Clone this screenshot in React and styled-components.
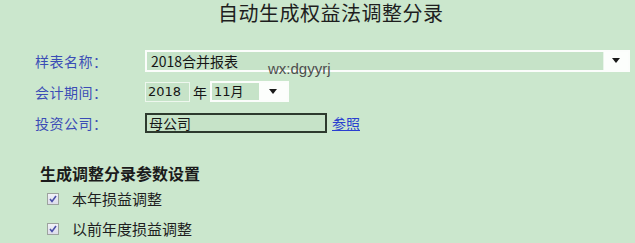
import React from "react";
import styled, { createGlobalStyle } from "styled-components";

const Global = createGlobalStyle`
    html, body {
        margin: 0;
        padding: 0;
        background: #cbe7cd;
    }
    body {
        font-family: "Noto Sans CJK SC", "Liberation Sans", sans-serif;
        line-height: 1.2;
    }
`

const Page = styled.div`
    position: relative;
    width: 635px;
    height: 243px;
    overflow: hidden;
    background: #cbe7cd;
    box-sizing: border-box;
    padding: 0 5px 0 35px;
`

const Title = styled.h1`
    margin: 0;
    padding-left: 183px;
    height: 26px;
    line-height: 26px;
    font-size: 20px;
    font-weight: normal;
    color: #1e1e1e;
    letter-spacing: 0.5px;
`

const Form = styled.div`
    margin-top: 19px;
    display: flex;
    flex-direction: column;
`

const Row = styled.div`
    display: flex;
    align-items: center;
    height: 31px;
`

const Label = styled.div`
    width: 110px;
    font-size: 14px;
    line-height: 20px;
    color: #3b4db6;
    letter-spacing: 0.5px;
`

const SelectBox = styled.div`
    display: flex;
    align-items: stretch;
    width: ${p => p.w}px;
    height: ${p => p.h || 22}px;
    border: 2px solid #fbfdfb;
    box-sizing: border-box;
    background: #c6e3c8;
`

const SelectText = styled.div`
    flex: 1;
    display: flex;
    align-items: center;
    padding-left: 4px;
    font-size: 14px;
    line-height: 18px;
    color: #151515;
    border-right: 1px solid #e9f4ea;
`

const ArrowCell = styled.div`
    width: ${p => p.w || 24}px;
    background: #fcfefc;
    display: flex;
    align-items: center;
    justify-content: center;
`

const Arrow = styled.span`
    width: 0;
    height: 0;
    border-left: 4px solid transparent;
    border-right: 4px solid transparent;
    border-top: 5px solid #1a1a1a;
`

const YearBox = styled.div`
    width: 45px;
    height: 20px;
    box-sizing: border-box;
    border: 1px solid #eef7ee;
    background: #c6e3c8;
    font-family: "DejaVu Sans", "Liberation Sans", sans-serif;
    font-size: 13px;
    line-height: 18px;
    color: #151515;
    display: flex;
    align-items: center;
    padding-left: 2px;
`

const Unit = styled.span`
    font-size: 14px;
    line-height: 20px;
    color: #151515;
    margin: 0 3px 0 3px;
`

const MonthText = styled(SelectText)`
    font-family: "DejaVu Sans", "Noto Sans CJK SC", sans-serif;
    font-size: 13px;
    border-right: none;
    padding-left: 2px;
`

const InputBox = styled.div`
    width: 182px;
    height: 20px;
    box-sizing: border-box;
    border: 2px solid #2d3a2e;
    background: #c6e3c8;
    font-size: 14px;
    line-height: 16px;
    color: #151515;
    display: flex;
    align-items: center;
    padding-left: 2px;
`

const Link = styled.a`
    margin-left: 5px;
    font-size: 14px;
    line-height: 20px;
    color: #2a3fd0;
    text-decoration: underline;
    cursor: pointer;
`

const Section = styled.div`
    margin-top: 24px;
    padding-left: 5px;
`

const SectionTitle = styled.div`
    font-size: 16px;
    font-weight: bold;
    color: #1b1b1b;
    height: 22px;
    line-height: 22px;
`

const CheckRow = styled.label`
    display: flex;
    align-items: center;
    height: 34px;
    padding-left: 7px;
    font-size: 15px;
    line-height: 20px;
    color: #1e1e1e;
    &:first-of-type {
        height: 26px;
        margin-top: 2px;
    }
`

const Check = styled.span`
    width: 12px;
    height: 12px;
    box-sizing: border-box;
    border: 1px solid #9da39e;
    background: linear-gradient(#f2f2f8, #dcdcea);
    margin-right: 13px;
    display: flex;
    align-items: center;
    justify-content: center;
`

const Watermark = styled.div`
    position: absolute;
    left: 268px;
    top: 60px;
    font-family: "Liberation Sans", sans-serif;
    font-size: 15px;
    line-height: 18px;
    color: #4e4e4e;
`

const Tick = () => (
    <svg width="8" height="8" viewBox="0 0 8 8">
        <path d="M1 4 L3 6.5 L7 1" fill="none" stroke="#4a4fa8" strokeWidth="1.6" />
    </svg>
)

const App = () => {
    return <Page>
        <Global />
        <Title>自动生成权益法调整分录</Title>
        <Form>
            <Row>
                <Label>样表名称：</Label>
                <SelectBox w={485} h={22}>
                    <SelectText>2018合并报表</SelectText>
                    <ArrowCell w={24}><Arrow /></ArrowCell>
                </SelectBox>
            </Row>
            <Row>
                <Label>会计期间：</Label>
                <YearBox>2018</YearBox>
                <Unit>年</Unit>
                <SelectBox w={79} h={21}>
                    <MonthText>11月</MonthText>
                    <ArrowCell w={28}><Arrow /></ArrowCell>
                </SelectBox>
            </Row>
            <Row>
                <Label>投资公司：</Label>
                <InputBox>母公司</InputBox>
                <Link>参照</Link>
            </Row>
        </Form>
        <Section>
            <SectionTitle>生成调整分录参数设置</SectionTitle>
            <CheckRow><Check><Tick /></Check>本年损益调整</CheckRow>
            <CheckRow><Check><Tick /></Check>以前年度损益调整</CheckRow>
        </Section>
        <Watermark>wx:dgyyrj</Watermark>
    </Page>
}

export default App
